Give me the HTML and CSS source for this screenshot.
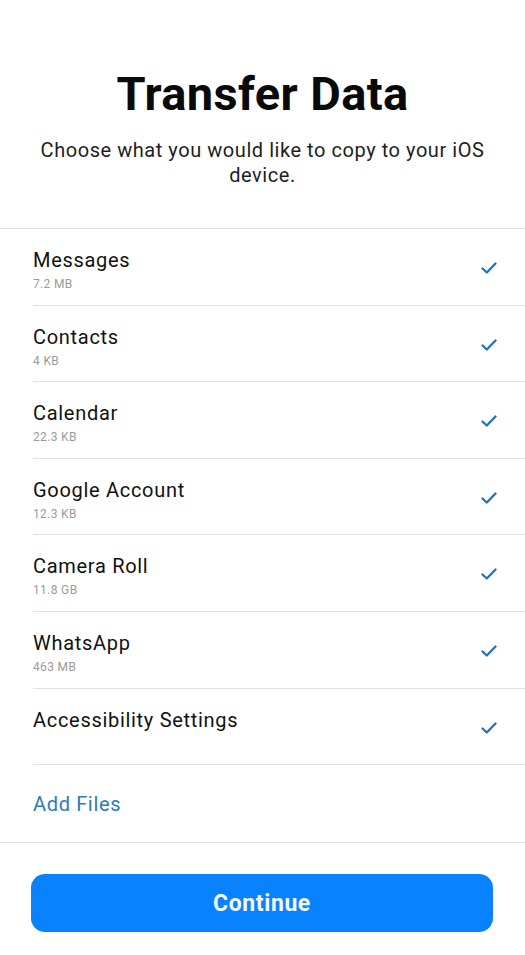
FILE: index.html
```html
<!DOCTYPE html>
<html>
<head>
<meta charset="utf-8">
<link rel="stylesheet" href="styles.css">
</head>
<body>
<div class="page">
  <header class="head">
    <h1 class="title">Transfer Data</h1>
    <p class="subtitle">Choose what you would like to copy to your iOS device.</p>
  </header>
  <ul class="list">
    <li class="row"><div class="text"><div class="name">Messages</div><div class="size">7.2 MB</div></div><svg class="check" viewBox="0 0 16 12"><polyline points="1.5,6.5 5.8,10.5 14.5,1.5"/></svg></li>
    <li class="row"><div class="text"><div class="name">Contacts</div><div class="size">4 KB</div></div><svg class="check" viewBox="0 0 16 12"><polyline points="1.5,6.5 5.8,10.5 14.5,1.5"/></svg></li>
    <li class="row"><div class="text"><div class="name">Calendar</div><div class="size">22.3 KB</div></div><svg class="check" viewBox="0 0 16 12"><polyline points="1.5,6.5 5.8,10.5 14.5,1.5"/></svg></li>
    <li class="row"><div class="text"><div class="name">Google Account</div><div class="size">12.3 KB</div></div><svg class="check" viewBox="0 0 16 12"><polyline points="1.5,6.5 5.8,10.5 14.5,1.5"/></svg></li>
    <li class="row"><div class="text"><div class="name">Camera Roll</div><div class="size">11.8 GB</div></div><svg class="check" viewBox="0 0 16 12"><polyline points="1.5,6.5 5.8,10.5 14.5,1.5"/></svg></li>
    <li class="row"><div class="text"><div class="name">WhatsApp</div><div class="size">463 MB</div></div><svg class="check" viewBox="0 0 16 12"><polyline points="1.5,6.5 5.8,10.5 14.5,1.5"/></svg></li>
    <li class="row"><div class="text"><div class="name">Accessibility Settings</div></div><svg class="check" viewBox="0 0 16 12"><polyline points="1.5,6.5 5.8,10.5 14.5,1.5"/></svg></li>
  </ul>
  <div class="add-row"><span class="add">Add Files</span></div>
  <div class="footer">
    <button class="continue">Continue</button>
  </div>
</div>
</body>
</html>
```

FILE: styles.css
```css
* { box-sizing: border-box; }
html, body { margin: 0; padding: 0; background: #fff; }
body { font-family: Roboto, "Noto Sans", sans-serif; color: #111; }
.page { width: 525px; }
.head {
  padding: 66px 20px 40px;
  text-align: center;
  border-bottom: 1px solid #e2e2e2;
}
.title {
  margin: 0;
  font-size: 47px;
  line-height: 56px;
  font-weight: 700;
  color: #0a0a0a;
  letter-spacing: 0.4px;
}
.subtitle {
  margin: 16px 0 0;
  font-size: 20px;
  line-height: 25px;
  color: #1e1e1e;
  letter-spacing: 0.55px;
}
.list { list-style: none; margin: 0; padding: 0 0 0 33px; }
.row {
  height: 76.6px;
  display: flex;
  align-items: flex-start;
  justify-content: space-between;
  border-bottom: 1px solid #e2e2e2;
  padding: 19px 28px 0 0;
}
.name { font-size: 20px; line-height: 24px; color: #111; letter-spacing: 0.7px; }
.size { margin-top: 4px; font-size: 12px; line-height: 16px; color: #9b9b9b; letter-spacing: 0.35px; }
.check {
  width: 16px; height: 12px;
  margin-top: 14px;
  fill: none;
  stroke: #2272ba;
  stroke-width: 2.3;
  stroke-linecap: round;
  stroke-linejoin: round;
}
.add-row {
  height: 78px;
  display: flex;
  align-items: center;
  padding-left: 33px;
  border-bottom: 1px solid #e2e2e2;
}
.add { font-size: 20px; line-height: 24px; color: #2a7bc1; letter-spacing: 0.65px; }
.footer { padding: 31px 32px 0 31px; }
.continue {
  width: 100%;
  height: 58px;
  border: none;
  border-radius: 14px;
  background: #0882fd;
  color: #f4f8ff;
  font-family: Roboto, "Noto Sans", sans-serif;
  font-weight: 700;
  font-size: 23px;
  letter-spacing: 0.6px;
}
```
